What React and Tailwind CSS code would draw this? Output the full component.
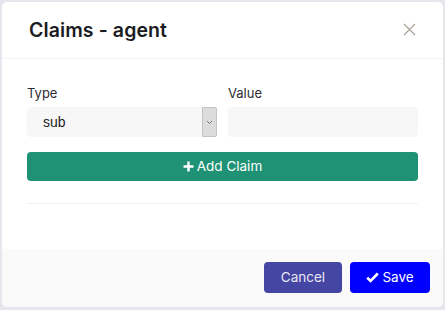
import React from "react";

export default function App() {
  const font = { fontFamily: "Inter, 'Noto Sans', sans-serif" };
  return (
    <div className="w-[445px] h-[310px] bg-[#e6e6ec] p-[2px] pb-[3px]" style={font}>
      <div className="h-full bg-white rounded-[5px] flex flex-col overflow-hidden">
        <div className="h-[57px] flex items-center justify-between pl-[27px] pr-[27px] border-b border-[#f3f3f5]">
          <div className="text-[19.5px] font-semibold text-[#1b1b22] tracking-[0.1px] pt-[2px]">Claims - agent</div>
          <svg width="13" height="13" viewBox="0 0 13 13" className="mt-[-2px]">
            <path d="M1 1 L12 12 M12 1 L1 12" stroke="#a89f95" strokeWidth="1.1" />
          </svg>
        </div>
        <div className="flex-1 px-[25px] pt-[26px]">
          <div className="flex gap-[11px]">
            <div className="flex-1 flex flex-col">
              <label className="text-[13px] text-[#2c2c33] leading-[16px] mb-[6px]">Type</label>
              <div className="h-[30px] bg-[#f7f7f7] rounded-[4px] flex items-stretch">
                <div className="flex-1 flex items-center pl-[16px] text-[14px] text-[#1e1e1e]" style={{ fontFamily: "'Liberation Sans', Arial, sans-serif" }}>sub</div>
                <div className="w-[15px] bg-[#dcdcdc] border border-[#c4c4c4] flex items-center justify-center rounded-r-[2px]">
                  <svg width="7" height="5" viewBox="0 0 7 5"><path d="M1 1 L3.5 3.5 L6 1" fill="none" stroke="#777" strokeWidth="1" /></svg>
                </div>
              </div>
            </div>
            <div className="flex-1 flex flex-col">
              <label className="text-[13px] text-[#2c2c33] leading-[16px] mb-[6px]">Value</label>
              <div className="h-[30px] bg-[#f7f7f7] rounded-[4px]"></div>
            </div>
          </div>
          <button className="mt-[15px] w-full h-[29px] bg-[#1f9276] rounded-[4px] text-white text-[13.5px] flex items-center justify-center gap-[3px]">
            <svg width="11" height="11" viewBox="0 0 11 11"><path d="M5.5 0.5 V10.5 M0.5 5.5 H10.5" stroke="white" strokeWidth="2.4" /></svg>
            Add Claim
          </button>
          <div className="mt-[22px] border-t border-[#f2f2f4]"></div>
        </div>
        <div className="h-[58px] bg-[#fafafa] flex items-center justify-end gap-[8px] pr-[13px] pb-[2px]">
          <button className="w-[78px] h-[31px] bg-[#4546a3] rounded-[4px] text-[#e8e8f5] text-[13.5px]">Cancel</button>
          <button className="w-[80px] h-[31px] bg-[#0000ff] rounded-[4px] text-white text-[13.5px] flex items-center justify-center gap-[3px]">
            <svg width="13" height="11" viewBox="0 0 13 11"><path d="M1.2 5.8 L4.6 9 L11.8 1.5" fill="none" stroke="white" strokeWidth="2.6" /></svg>
            Save
          </button>
        </div>
      </div>
    </div>
  );
}
